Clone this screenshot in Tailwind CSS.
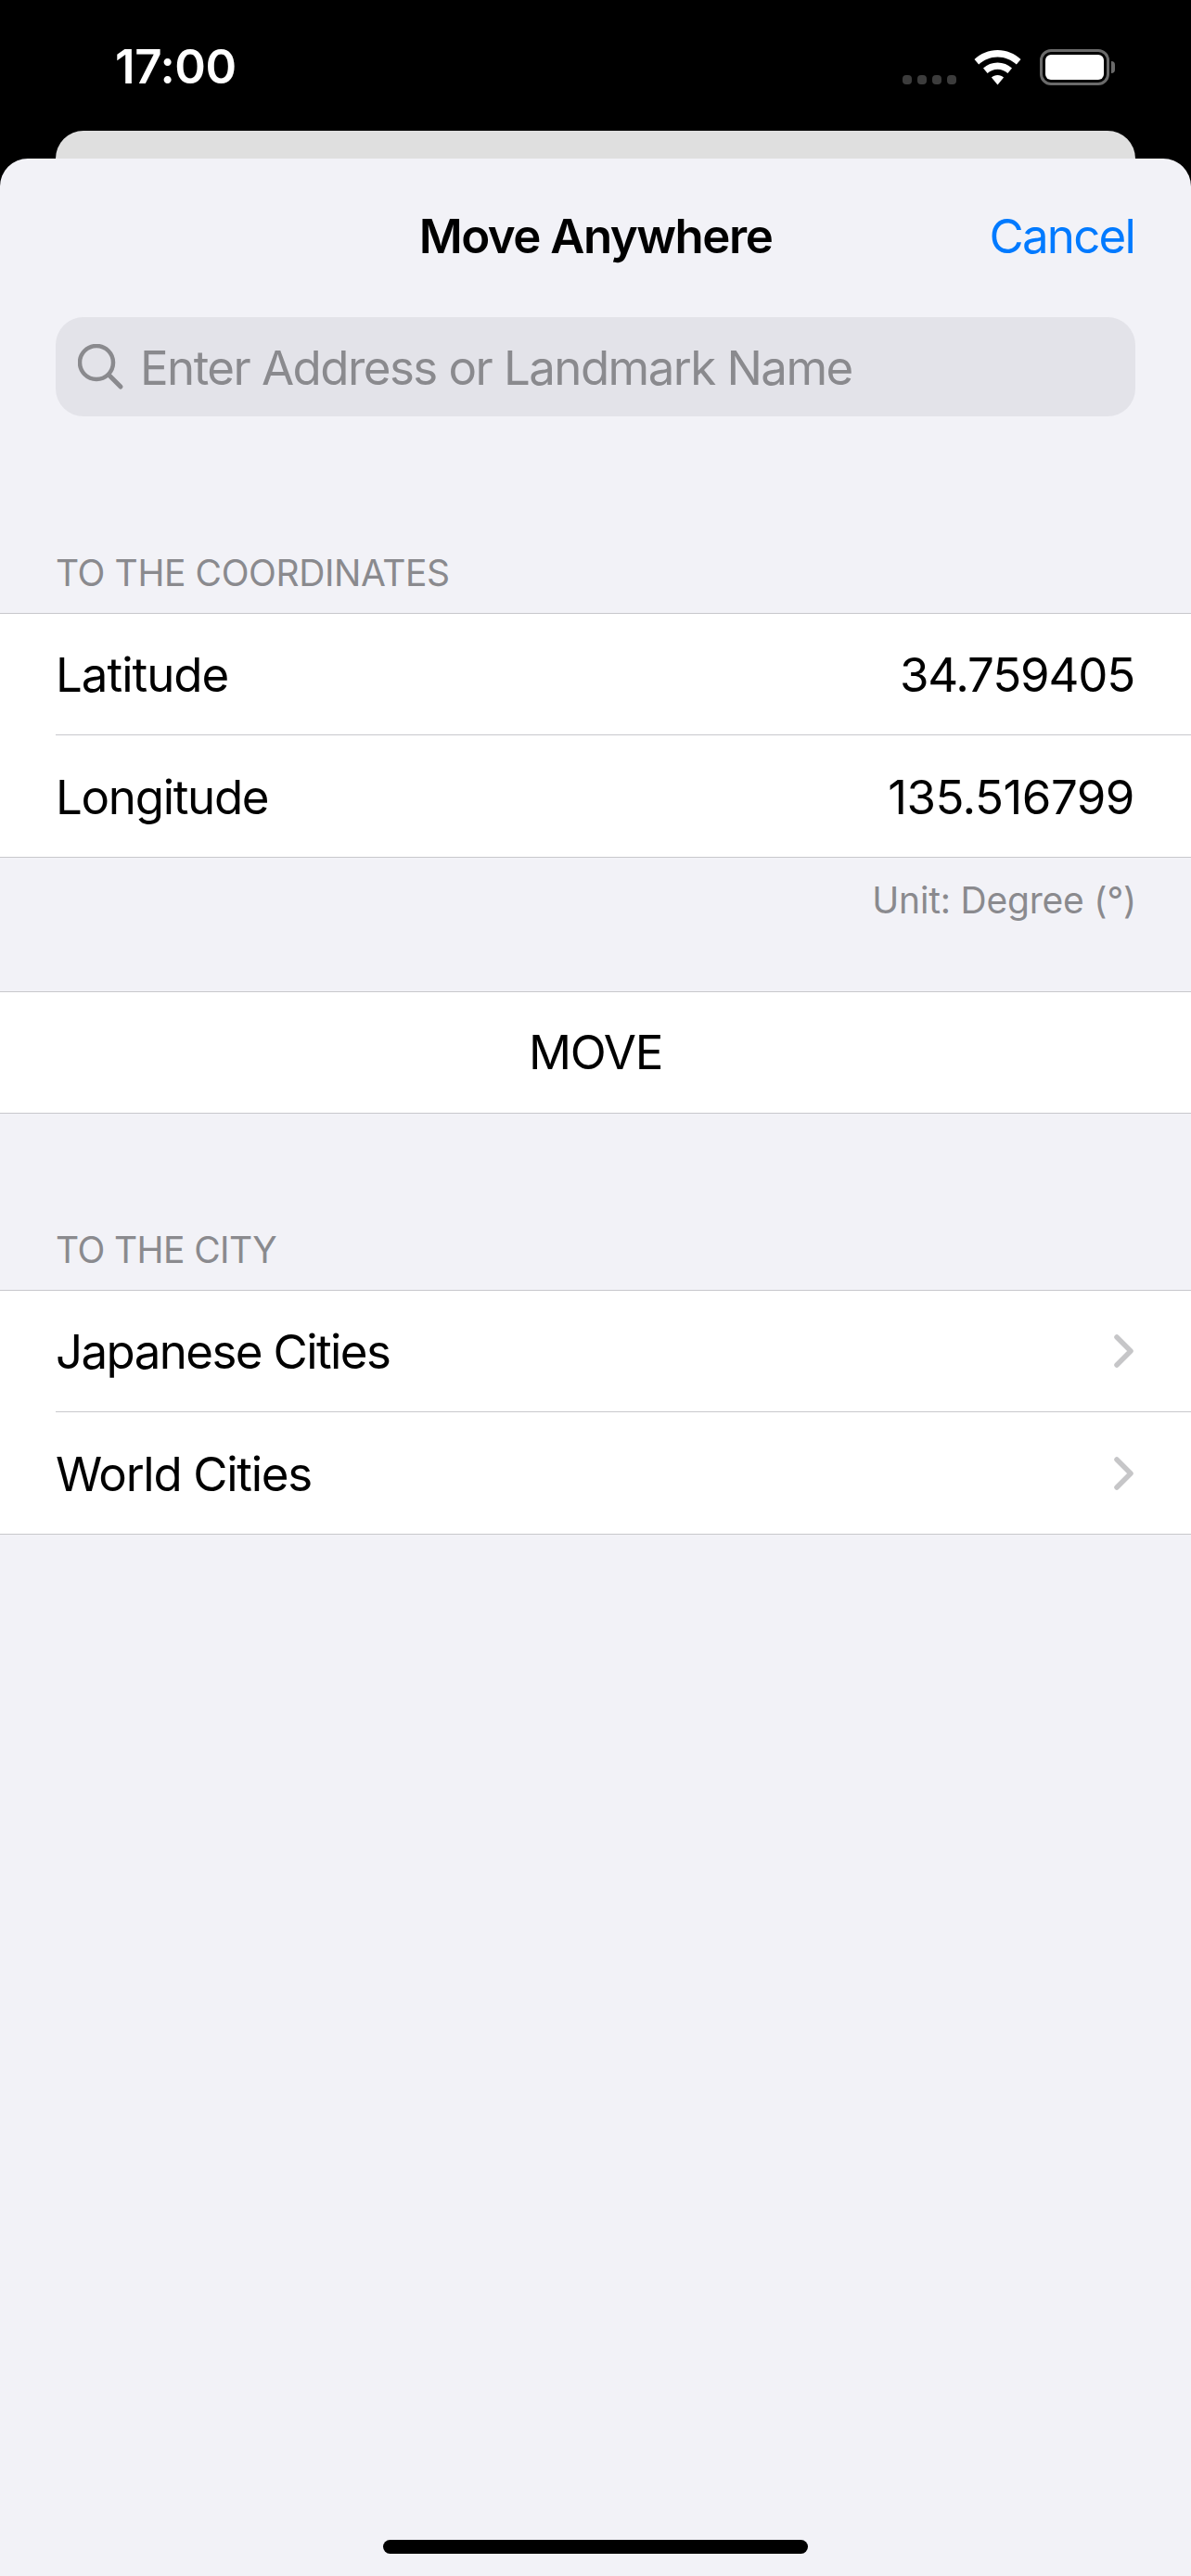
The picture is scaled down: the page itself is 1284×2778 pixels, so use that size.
<!DOCTYPE html>
<html lang="en">
<head>
  <meta charset="UTF-8" />
  <title>Move Anywhere</title>
  <script src="https://cdn.jsdelivr.net/npm/@tailwindcss/browser@4"></script>
</head>
<body class="bg-black w-[1284px] h-[2778px] overflow-hidden font-['Inter',sans-serif] flex flex-col">

  <!-- status bar -->
  <div class="h-[141px] shrink-0 flex items-start pt-[47px] pl-[124px] pr-[82px] text-white">
    <span class="text-[51px] leading-[50px] font-semibold tracking-[-0.4px]">17:00</span>
    <div class="ml-auto flex items-start">
      <div class="flex gap-[6px] mt-[34px] mr-[19px]">
        <span class="w-[10px] h-[10px] rounded-[4px] bg-[#3c3c3c]"></span>
        <span class="w-[10px] h-[10px] rounded-[4px] bg-[#3c3c3c]"></span>
        <span class="w-[10px] h-[10px] rounded-[4px] bg-[#3c3c3c]"></span>
        <span class="w-[10px] h-[10px] rounded-[4px] bg-[#3c3c3c]"></span>
      </div>
      <svg class="mt-[7px] mr-[20px]" width="51" height="38" viewBox="0 0 51 38" fill="white">
        <path d="M25.5 0C15.8 0 7.2 3.7 0.5 10L5.2 15.5C10.6 10.5 17.7 7.4 25.5 7.4C33.3 7.4 40.4 10.5 45.8 15.5L50.5 10C43.8 3.7 35.2 0 25.5 0Z"/>
        <path d="M25.5 13.5C19.6 13.5 14.2 15.8 10 19.6L14.6 25C17.5 22.3 21.3 20.7 25.5 20.7C29.7 20.7 33.5 22.3 36.4 25L41 19.6C36.8 15.8 31.4 13.5 25.5 13.5Z"/>
        <path d="M25.5 27C22.9 27 20.6 28 18.9 29.6L25.5 37.5L32.1 29.6C30.4 28 28.1 27 25.5 27Z"/>
      </svg>
      <div class="flex items-center mt-[6px]">
        <div class="w-[75px] h-[39px] rounded-[12px] border-[3px] border-[#6a6a6a] p-[3px]">
          <div class="w-full h-full rounded-[6px] bg-white"></div>
        </div>
        <div class="w-[4px] h-[13px] ml-[2px] rounded-r-full bg-[#6a6a6a]"></div>
      </div>
    </div>
  </div>

  <!-- card behind the sheet -->
  <div class="h-[30px] shrink-0 mx-[60px] rounded-t-[30px] bg-[#dfdfdf]"></div>

  <!-- sheet -->
  <div class="flex-1 relative rounded-t-[30px] bg-[#f2f2f7] text-black">
    <div class="h-[171px] relative flex items-start justify-center pt-[54px]">
      <span class="text-[51px] leading-[60px] font-semibold tracking-[-1.5px]">Move Anywhere</span>
      <span class="absolute right-[61px] top-[54px] text-[51px] leading-[60px] tracking-[-1.8px] text-[#007aff]">Cancel</span>
    </div>

    <div class="mx-[60px] h-[107px] rounded-[30px] bg-[#e3e3e9] flex items-center pl-[24px] text-[#8a8a8e]">
      <svg width="50" height="50" viewBox="0 0 50 50" fill="none" stroke="currentColor" stroke-width="4.5" stroke-linecap="round">
        <circle cx="20" cy="20" r="18"/>
        <path d="M33.5 33.5L46 46" stroke-width="5"/>
      </svg>
      <span class="ml-[17px] mt-[3px] text-[51px] leading-[60px] tracking-[-1.55px]">Enter Address or Landmark Name</span>
    </div>

    <div class="h-[212px] pl-[60px] flex items-end pb-[20px] text-[39px] leading-[46px] tracking-[-0.4px] text-[#8a8a8e]">TO THE COORDINATES</div>

    <div class="bg-white border-y border-[#c8c8cc]">
      <div class="h-[130px] flex items-center justify-between pl-[60px] pr-[61px] text-[51px]">
        <span class="mt-[3px] tracking-[-1px]">Latitude</span><span class="mt-[3px] tracking-[-1.2px]">34.759405</span>
      </div>
      <div class="ml-[60px] h-px bg-[#c8c8cc]"></div>
      <div class="h-[131px] flex items-center justify-between pl-[60px] pr-[61px] text-[51px]">
        <span class="mt-[3px] tracking-[-1.3px]">Longitude</span><span class="mt-[3px] tracking-[-0.5px]">135.516799</span>
      </div>
    </div>

    <div class="h-[144px] pr-[59px] pt-[23px] text-right text-[39px] leading-[46px] tracking-[-0.2px] text-[#8a8a8e]">Unit: Degree (°)</div>

    <div class="h-[132px] bg-white border-y border-[#c8c8cc] flex items-center justify-center text-[51px] tracking-[-1.3px]">MOVE</div>

    <div class="h-[190px] pl-[60px] flex items-end pb-[20px] text-[39px] leading-[46px] tracking-[-0.6px] text-[#8a8a8e]">TO THE CITY</div>

    <div class="bg-white border-y border-[#c8c8cc]">
      <div class="h-[130px] flex items-center justify-between pl-[60px] pr-[62px] text-[51px]">
        <span class="mt-[3px] tracking-[-1.6px]">Japanese Cities</span>
        <svg width="21" height="36" viewBox="0 0 21 36" fill="none" stroke="#c6c6c8" stroke-width="5.5" stroke-linecap="round" stroke-linejoin="round"><path d="M3 3L18 18L3 33"/></svg>
      </div>
      <div class="ml-[60px] h-px bg-[#c8c8cc]"></div>
      <div class="h-[131px] flex items-center justify-between pl-[60px] pr-[62px] text-[51px]">
        <span class="mt-[3px] tracking-[-1.3px]">World Cities</span>
        <svg width="21" height="36" viewBox="0 0 21 36" fill="none" stroke="#c6c6c8" stroke-width="5.5" stroke-linecap="round" stroke-linejoin="round"><path d="M3 3L18 18L3 33"/></svg>
      </div>
    </div>

    <!-- home indicator -->
    <div class="absolute bottom-[24px] left-[413px] w-[458px] h-[15px] rounded-full bg-black"></div>
  </div>
</body>
</html>
